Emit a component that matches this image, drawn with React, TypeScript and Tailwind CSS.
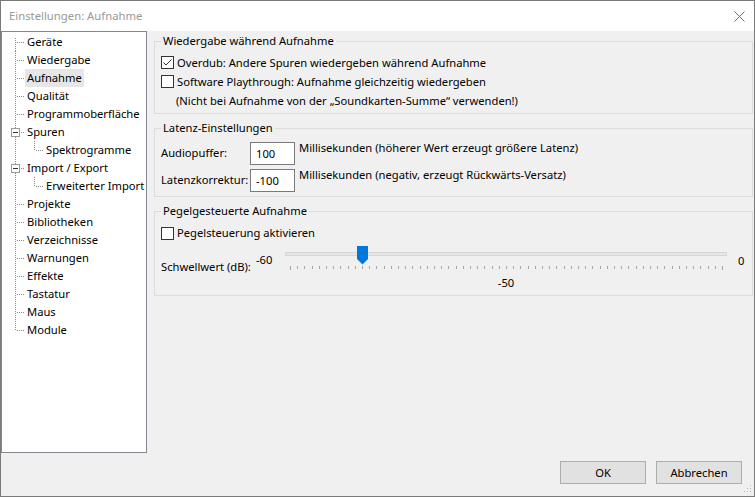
import React from 'react';

type TreeItem = {
  label: string;
  level: 0 | 1;
  selected?: boolean;
  expander?: boolean;
  first?: boolean;
  last?: boolean;
};

const treeItems: TreeItem[] = [
  { label: 'Geräte', level: 0, first: true },
  { label: 'Wiedergabe', level: 0 },
  { label: 'Aufnahme', level: 0, selected: true },
  { label: 'Qualität', level: 0 },
  { label: 'Programmoberfläche', level: 0 },
  { label: 'Spuren', level: 0, expander: true },
  { label: 'Spektrogramme', level: 1 },
  { label: 'Import / Export', level: 0, expander: true },
  { label: 'Erweiterter Import', level: 1 },
  { label: 'Projekte', level: 0 },
  { label: 'Bibliotheken', level: 0 },
  { label: 'Verzeichnisse', level: 0 },
  { label: 'Warnungen', level: 0 },
  { label: 'Effekte', level: 0 },
  { label: 'Tastatur', level: 0 },
  { label: 'Maus', level: 0 },
  { label: 'Module', level: 0, last: true },
];

const dot = '#8a8a8a';

function Gutter({ item }: { item: TreeItem }) {
  if (item.level === 1) {
    return (
      <svg width="42" height="18" className="shrink-0" shapeRendering="crispEdges">
        <line x1="13.5" y1="0" x2="13.5" y2="18" stroke={dot} strokeDasharray="1 1" />
        <line x1="32.5" y1="0" x2="32.5" y2="10" stroke={dot} strokeDasharray="1 1" />
        <line x1="34" y1="9.5" x2="42" y2="9.5" stroke={dot} strokeDasharray="1 1" />
      </svg>
    );
  }
  const y1 = item.first ? 5 : 0;
  const y2 = item.last ? 10 : 18;
  return (
    <svg width="23" height="18" className="shrink-0" shapeRendering="crispEdges">
      <line x1="13.5" y1={y1} x2="13.5" y2={y2} stroke={dot} strokeDasharray="1 1" />
      <line x1="15" y1="9.5" x2="23" y2="9.5" stroke={dot} strokeDasharray="1 1" />
      {item.expander && (
        <g>
          <rect x="9.5" y="5.5" width="8" height="8" fill="#ffffff" stroke="#9a9a9a" />
          <line x1="11" y1="9.5" x2="16" y2="9.5" stroke="#333333" />
        </g>
      )}
    </svg>
  );
}

function Checkbox({ checked }: { checked?: boolean }) {
  return (
    <span className="w-[13px] h-[13px] border border-[#333333] bg-white shrink-0 flex items-center justify-center">
      {checked && (
        <svg width="11" height="11" viewBox="0 0 11 11">
          <polyline points="1.5,5.5 4,8 9.5,2.5" fill="none" stroke="#333333" strokeWidth="1" />
        </svg>
      )}
    </span>
  );
}

function Slider() {
  const ticks = Array.from({ length: 61 }, (_, i) => Math.round(5 + i * 7.2) + 0.5);
  return (
    <svg width="442" height="26" className="block">
      <rect x="0.5" y="8.5" width="441" height="3" fill="#e7e7e7" stroke="#d6d6d6" />
      {ticks.map((x, i) => (
        <line
          key={i}
          x1={x}
          y1={22}
          x2={x}
          y2={i === 0 || i === 60 ? 26 : 25}
          stroke="#a6a6a6"
          strokeWidth="1"
        />
      ))}
      <path d="M72 2 H83 V15 L77.5 20.5 L72 15 Z" fill="#0078d7" />
    </svg>
  );
}

export default function App() {
  return (
    <div className="w-[755px] h-[497px] bg-[#f0f0f0] border border-[#7a7a7a] flex flex-col font-['Noto_Sans',sans-serif] text-[11.2px] leading-[16px] text-black relative overflow-hidden">
      {/* Title bar */}
      <div className="h-[30px] bg-white flex items-center justify-between pl-[8px] pr-[9px] shrink-0">
        <span className="text-[#999999] text-[11.3px]">Einstellungen: Aufnahme</span>
        <svg width="11" height="11" viewBox="0 0 11 11">
          <line x1="0.5" y1="0.5" x2="10.5" y2="10.5" stroke="#6f6f6f" strokeWidth="1" />
          <line x1="10.5" y1="0.5" x2="0.5" y2="10.5" stroke="#6f6f6f" strokeWidth="1" />
        </svg>
      </div>

      {/* Main */}
      <div className="flex h-[422px] shrink-0">
        {/* Tree */}
        <div className="w-[146px] border border-[#828790] bg-white pt-[1px] shrink-0">
          {treeItems.map((item) => (
            <div key={item.label} className="flex h-[18px] items-center">
              <Gutter item={item} />
              <span
                className={
                  'px-[2px] h-[18px] flex items-center whitespace-nowrap ' +
                  (item.selected ? 'bg-[#e6e6e6]' : '')
                }
              >
                {item.label}
              </span>
            </div>
          ))}
        </div>

        {/* Right content */}
        <div className="flex-1 flex flex-col pl-[7px] pr-[1px] pt-[2px]">
          {/* Group 1 */}
          <fieldset className="border border-[#dcdcdc] px-[6px] pt-[4px] pb-[2px]">
            <legend className="px-[2px]">Wiedergabe während Aufnahme</legend>
            <div className="h-[19px] flex items-center gap-[3px]">
              <Checkbox checked />
              <span>Overdub: Andere Spuren wiedergeben während Aufnahme</span>
            </div>
            <div className="h-[19px] flex items-center gap-[3px]">
              <Checkbox />
              <span>Software Playthrough: Aufnahme gleichzeitig wiedergeben</span>
            </div>
            <div className="h-[20px] flex items-center pl-[15px]">
              <span>(Nicht bei Aufnahme von der „Soundkarten-Summe“ verwenden!)</span>
            </div>
          </fieldset>

          {/* Group 2 */}
          <fieldset className="border border-[#dcdcdc] px-[6px] pt-[6px] pb-[4px] mt-[6px]">
            <legend className="px-[2px]">Latenz-Einstellungen</legend>
            <div className="flex items-start h-[23px]">
              <span className="w-[89px] mt-[3px] shrink-0">Audiopuffer:</span>
              <div className="w-[45px] h-[23px] border border-[#7a7a7a] bg-white pl-[5px] flex items-center shrink-0">
                100
              </div>
              <span className="ml-[4px] -mt-[2px]">Millisekunden (höherer Wert erzeugt größere Latenz)</span>
            </div>
            <div className="flex items-start h-[23px] mt-[4px]">
              <span className="w-[89px] mt-[3px] shrink-0">Latenzkorrektur:</span>
              <div className="w-[45px] h-[23px] border border-[#7a7a7a] bg-white pl-[5px] flex items-center shrink-0">
                -100
              </div>
              <span className="ml-[4px] -mt-[2px]">Millisekunden (negativ, erzeugt Rückwärts-Versatz)</span>
            </div>
          </fieldset>

          {/* Group 3 */}
          <fieldset className="border border-[#dcdcdc] px-[6px] pt-[5px] pb-[4px] mt-[6px]">
            <legend className="px-[2px]">Pegelgesteuerte Aufnahme</legend>
            <div className="h-[18px] flex items-center gap-[3px]">
              <Checkbox />
              <span>Pegelsteuerung aktivieren</span>
            </div>
            <div className="flex items-start mt-[2px]">
              <span className="w-[95px] mt-[15px] shrink-0">Schwellwert (dB):</span>
              <span className="w-[29px] mt-[8px] shrink-0">-60</span>
              <div className="w-[442px] flex flex-col shrink-0">
                <Slider />
                <div className="mt-[5px] text-center">-50</div>
              </div>
              <span className="ml-[11px] mt-[9px]">0</span>
            </div>
          </fieldset>
        </div>
      </div>

      {/* Footer */}
      <div className="flex-1 flex justify-end items-start pt-[8px] pr-[12px] gap-[10px]">
        <button className="w-[86px] h-[23px] bg-[#e1e1e1] border border-[#adadad] flex items-center justify-center">
          OK
        </button>
        <button className="w-[86px] h-[23px] bg-[#e1e1e1] border border-[#adadad] flex items-center justify-center">
          Abbrechen
        </button>
      </div>

      {/* Resize grip */}
      <svg width="9" height="9" className="absolute right-[2px] bottom-[3px]" shapeRendering="crispEdges">
        <rect x="7" y="1" width="1" height="1" fill="#b5b5b5" />
        <rect x="4" y="4" width="1" height="1" fill="#b5b5b5" />
        <rect x="7" y="4" width="1" height="1" fill="#b5b5b5" />
        <rect x="1" y="7" width="1" height="1" fill="#b5b5b5" />
        <rect x="4" y="7" width="1" height="1" fill="#b5b5b5" />
        <rect x="7" y="7" width="1" height="1" fill="#b5b5b5" />
      </svg>
    </div>
  );
}
